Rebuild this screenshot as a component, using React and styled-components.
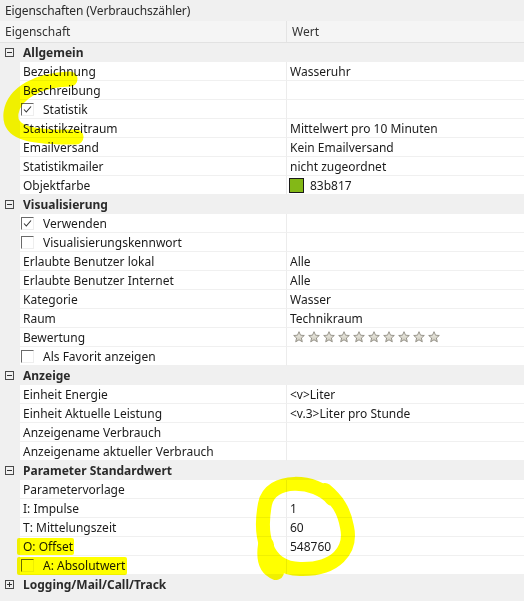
import React from "react";
import styled, { createGlobalStyle } from "styled-components";

const Global = createGlobalStyle`
  html, body { margin: 0; padding: 0; background: #ffffff; }
  body { font-family: "Noto Sans", "Open Sans", sans-serif; font-size: 12px; color: #1b1b1b; }
`;

const Panel = styled.div`
  position: relative;
  width: 524px;
  height: 601px;
  overflow: hidden;
  background: #f0f0f0;
`;

const TitleBar = styled.div`
  height: 21px;
  display: flex;
  align-items: center;
  padding-left: 5px;
  background: #f0f0f0;
  color: #2a2a2a;
  letter-spacing: -0.1px;
`;

const Header = styled.div`
  height: 21px;
  display: grid;
  grid-template-columns: 286px 1fr;
  background: #f5f5f5;
  border-bottom: 1px solid #e2e2e2;
`;

const HeaderCell = styled.div`
  display: flex;
  align-items: center;
  padding-left: ${(p) => p.$pad}px;
  color: #333;
  border-left: ${(p) => (p.$divider ? "1px solid #e4e4e4" : "none")};
`;

const CategoryRow = styled.div`
  height: 19px;
  display: grid;
  grid-template-columns: 20px 1fr;
  align-items: center;
  background: #f0f0f0;
  font-weight: 700;
  color: #2b2b2b;
`;

const ToggleBox = styled.span`
  position: relative;
  width: 7px;
  height: 7px;
  margin-left: 5px;
  border: 1px solid #4a4a4a;
  &::before {
    content: "";
    position: absolute;
    left: 1px;
    right: 1px;
    top: 3px;
    height: 1px;
    background: #333;
  }
  &::after {
    content: "";
    display: ${(p) => (p.$plus ? "block" : "none")};
    position: absolute;
    top: 1px;
    bottom: 1px;
    left: 3px;
    width: 1px;
    background: #333;
  }
`;

const CatLabel = styled.span`
  padding-left: 3px;
`;

const Row = styled.div`
  height: 19px;
  display: grid;
  grid-template-columns: 20px 266px 1fr;
  background: #f0f0f0;
`;

const NameCell = styled.div`
  display: flex;
  align-items: center;
  gap: 9px;
  padding-left: ${(p) => (p.$check ? 1 : 3)}px;
  background: #ffffff;
  border-bottom: 1px solid #f0f0f0;
  white-space: nowrap;
`;

const ValueCell = styled.div`
  display: flex;
  align-items: center;
  gap: 6px;
  padding-left: 3px;
  background: #ffffff;
  border-left: 1px solid #ececec;
  border-bottom: 1px solid #f0f0f0;
  white-space: nowrap;
`;

const CheckBox = styled.span`
  position: relative;
  width: 11px;
  height: 11px;
  border-top: 1px solid #6a6a6a;
  border-left: 1px solid #6a6a6a;
  border-right: 1px solid #eeeeee;
  border-bottom: 1px solid #eeeeee;
  flex: none;
`;

const CheckMark = styled.svg`
  position: absolute;
  left: 1px;
  top: 1px;
`;

const Swatch = styled.span`
  width: 13px;
  height: 13px;
  background: ${(p) => p.$color};
  border: 1px solid #1a1a1a;
  margin-left: -1px;
`;

const Stars = styled.div`
  display: flex;
  gap: 3px;
  padding-left: 3px;
`;

const Overlay = styled.svg`
  position: absolute;
  left: 0;
  top: 0;
  pointer-events: none;
  mix-blend-mode: multiply;
`;

const sections = [
  {
    title: "Allgemein",
    open: true,
    rows: [
      { name: "Bezeichnung", value: "Wasseruhr" },
      { name: "Beschreibung" },
      { name: "Statistik", check: true, checked: true },
      { name: "Statistikzeitraum", value: "Mittelwert pro 10 Minuten" },
      { name: "Emailversand", value: "Kein Emailversand" },
      { name: "Statistikmailer", value: "nicht zugeordnet" },
      { name: "Objektfarbe", value: "83b817", color: "#83b817" },
    ],
  },
  {
    title: "Visualisierung",
    open: true,
    rows: [
      { name: "Verwenden", check: true, checked: true },
      { name: "Visualisierungskennwort", check: true },
      { name: "Erlaubte Benutzer lokal", value: "Alle" },
      { name: "Erlaubte Benutzer Internet", value: "Alle" },
      { name: "Kategorie", value: "Wasser" },
      { name: "Raum", value: "Technikraum" },
      { name: "Bewertung", stars: 10 },
      { name: "Als Favorit anzeigen", check: true },
    ],
  },
  {
    title: "Anzeige",
    open: true,
    rows: [
      { name: "Einheit Energie", value: "<v>Liter" },
      { name: "Einheit Aktuelle Leistung", value: "<v.3>Liter pro Stunde" },
      { name: "Anzeigename Verbrauch" },
      { name: "Anzeigename aktueller Verbrauch" },
    ],
  },
  {
    title: "Parameter Standardwert",
    open: true,
    rows: [
      { name: "Parametervorlage" },
      { name: "I: Impulse", value: "1" },
      { name: "T: Mittelungszeit", value: "60" },
      { name: "O: Offset", value: "548760" },
      { name: "A: Absolutwert", check: true },
    ],
  },
  { title: "Logging/Mail/Call/Track", open: false, rows: [] },
];

function Star() {
  return (
    <svg width="12" height="12" viewBox="0 0 12 12">
      <defs>
        <linearGradient id="sg" x1="0" y1="0" x2="0" y2="1">
          <stop offset="0" stopColor="#f4f2ea" />
          <stop offset="1" stopColor="#c9c6ba" />
        </linearGradient>
      </defs>
      <polygon
        points="6,0.7 7.5,4.2 11.3,4.5 8.4,7 9.3,10.8 6,8.8 2.7,10.8 3.6,7 0.7,4.5 4.5,4.2"
        fill="url(#sg)"
        stroke="#8d8a80"
        strokeWidth="0.9"
        strokeLinejoin="round"
      />
    </svg>
  );
}

function PropRow({ row }) {
  return (
    <Row>
      <span />
      <NameCell $check={row.check}>
        {row.check && (
          <CheckBox>
            {row.checked && (
              <CheckMark width="9" height="9" viewBox="0 0 9 9">
                <polyline points="1,4.5 3.3,7 8,1.5" fill="none" stroke="#333" strokeWidth="1.1" />
              </CheckMark>
            )}
          </CheckBox>
        )}
        {row.name}
      </NameCell>
      <ValueCell>
        {row.color && <Swatch $color={row.color} />}
        {row.stars ? (
          <Stars>
            {Array.from({ length: row.stars }).map((_, i) => (
              <Star key={i} />
            ))}
          </Stars>
        ) : (
          row.value
        )}
      </ValueCell>
    </Row>
  );
}

export default function App() {
  return (
    <>
      <Global />
      <Panel>
        <TitleBar>Eigenschaften (Verbrauchszähler)</TitleBar>
        <Header>
          <HeaderCell $pad={5}>Eigenschaft</HeaderCell>
          <HeaderCell $pad={5} $divider>Wert</HeaderCell>
        </Header>
        {sections.map((s) => (
          <React.Fragment key={s.title}>
            <CategoryRow>
              <ToggleBox $plus={!s.open} />
              <CatLabel>{s.title}</CatLabel>
            </CategoryRow>
            {s.open && s.rows.map((r) => <PropRow key={r.name} row={r} />)}
          </React.Fragment>
        ))}
        <Overlay width="524" height="601" viewBox="0 0 524 601">
          <g fill="none" stroke="#ffff00" strokeLinecap="round" strokeLinejoin="round">
            <path d="M 70 79 C 38 80, 14 93, 11 113 C 9 131, 24 138, 76 137" strokeWidth="15" />
            <path
              d="M 332 499 C 316 479, 270 477, 265 504 C 260 530, 262 568, 300 569 C 336 570, 352 550, 347 527 C 344 510, 337 500, 325 490"
              strokeWidth="14"
            />
            <path d="M 266 545 C 264 558, 266 568, 276 572" strokeWidth="16" />
          </g>
          <g fill="#ffff00">
            <rect x="17" y="538" width="57" height="17" rx="2" />
            <rect x="17" y="557" width="110" height="18" rx="2" />
          </g>
        </Overlay>
      </Panel>
    </>
  );
}
